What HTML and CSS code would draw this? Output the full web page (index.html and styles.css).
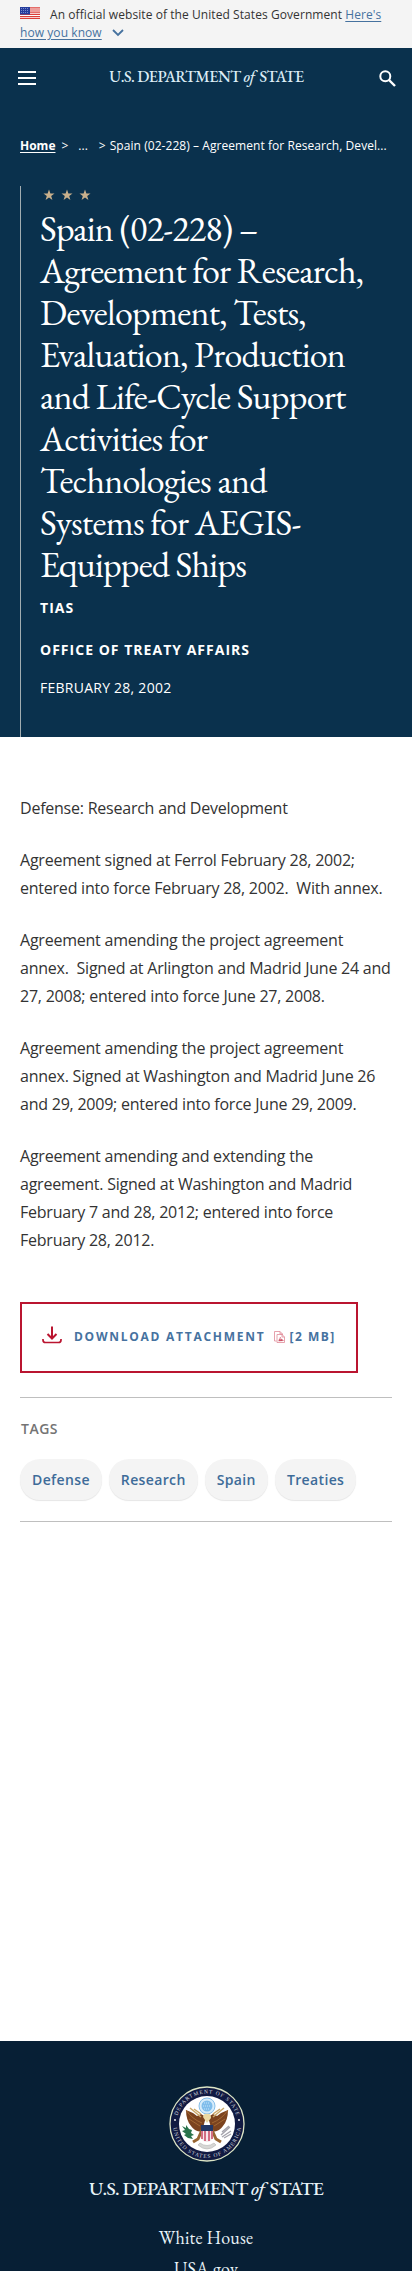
FILE: index.html
```html
<!DOCTYPE html>
<html lang="en">
<head>
<meta charset="utf-8">
<meta name="viewport" content="width=device-width">
<title>Spain (02-228) – Agreement for Research, Development, Tests</title>
<link rel="stylesheet" href="styles.css">
</head>
<body>
<div class="banner">
  <svg class="flag" viewBox="0 0 20 12" width="20" height="12"><rect width="20" height="12" fill="#fff"/><path d="M0 .8h20M0 3h20M0 5.2h20M0 7.4h20M0 9.6h20M0 11.6h20" stroke="#db3e39" stroke-width="1.2"/><rect width="10" height="7.5" fill="#243c9c"/><path d="M1 1.5h8M1 3.5h8M1 5.5h8" stroke="#8d9bd8" stroke-dasharray="1 1" stroke-width=".8"/></svg><span class="official">An official website of the United States Government</span> <a class="know" href="#">Here's<br>how you know</a><svg class="chev" viewBox="0 0 12 8" width="12" height="8"><path d="M1 1l5 5 5-5" fill="none" stroke="#46729f" stroke-width="1.8"/></svg>
</div>
<header class="bar">
  <svg class="menu" width="18" height="14" viewBox="0 0 18 14"><path d="M0 1h18M0 7h18M0 13h18" stroke="#fff" stroke-width="2"/></svg>
  <div class="brand">U.S. DEPARTMENT <i>of</i> STATE</div>
  <svg class="search" width="17" height="17" viewBox="0 0 17 17" fill="none" stroke="#fff"><circle cx="6.3" cy="6.3" r="5" stroke-width="2"/><path d="M10 10l6 6" stroke-width="2.4"/></svg>
</header>
<section class="hero">
  <nav class="crumbs"><a href="#">Home</a><span class="gt">&gt;</span><span class="dots">...</span><span class="gt2">&gt;</span><span class="here">Spain (02-228) – Agreement for Research, Devel...</span></nav>
  <div class="title-block">
    <svg class="stars" width="48" height="12" viewBox="0 0 48 12" fill="#c9b08c"><defs><path id="star" d="M6 .5l1.4 4h4.1L8.2 7l1.2 4L6 8.600 2.600 11l1.200-4L.5 4.500h4.100z"/></defs><use href="#star"/><use href="#star" x="18"/><use href="#star" x="36"/></svg>
    <h1>Spain (02-228) –<br>Agreement for Research,<br>Development, Tests,<br>Evaluation, Production<br>and Life-Cycle Support<br>Activities for<br>Technologies and<br>Systems for AEGIS-<br>Equipped Ships</h1>
    <p class="kind">TIAS</p>
    <p class="office">OFFICE OF TREATY AFFAIRS</p>
    <p class="date">FEBRUARY 28, 2002</p>
  </div>
</section>
<main>
  <div class="copy">
    <p>Defense: Research and Development</p>
    <p>Agreement signed at Ferrol February 28, 2002;<br>entered into force February 28, 2002.&nbsp; With annex.</p>
    <p>Agreement amending the project agreement<br>annex.&nbsp; Signed at Arlington and Madrid June 24 and<br>27, 2008; entered into force June 27, 2008.</p>
    <p>Agreement amending the project agreement<br>annex. Signed at Washington and Madrid June 26<br>and 29, 2009; entered into force June 29, 2009.</p>
    <p>Agreement amending and extending the<br>agreement. Signed at Washington and Madrid<br>February 7 and 28, 2012; entered into force<br>February 28, 2012.</p>
  </div>
  <a class="download" href="#">
    <svg class="dl" width="20" height="18" viewBox="0 0 20 18" fill="none" stroke="#ba1530" stroke-width="2"><path d="M10 .5v12M5.500 8l4.500 4.500L14.500 8"/><path d="M1 13v1q0 2.500 2.500 2.500h13q2.500 0 2.500-2.500v-1" stroke-width="1.700"/></svg>
    <span>DOWNLOAD ATTACHMENT</span>
    <svg class="pdf" width="11" height="12" viewBox="0 0 11 12" fill="none" stroke="#df8a98" stroke-width=".8"><path d="M2.500 10H.5V.5H6L8.500 3v1M6 .5V3h2.500M3 11.500v-8h5L10.500 6v5.500zM8 3.500V6h2.500M4.500 10l2-4 .5 2.500 2.500 1z"/><path d="M5 8.500h3.500v1.200H5z" fill="#c0273f" stroke="none"/></svg>
    <span class="size">[2 MB]</span>
  </a>
  <section class="tags">
    <h2>TAGS</h2>
    <div class="chips"><a href="#">Defense</a><a href="#">Research</a><a href="#">Spain</a><a href="#">Treaties</a></div>
  </section>
</main>
<footer>
  <svg class="seal" width="76" height="76" viewBox="0 0 76 76">
    <defs><path id="top" d="M7.500 38a30.500 30.500 0 0 1 61 0"/><path id="bottom" d="M4 38a34 34 0 0 0 68 0"/></defs>
    <circle cx="38" cy="38" r="37" fill="#111a42" stroke="#dce4c5" stroke-width="1.300"/>
    <circle cx="38" cy="38" r="28" fill="#fff"/>
    <g class="ring"><text><textPath href="#top" startOffset="50%" textLength="79">DEPARTMENT OF STATE</textPath></text><text><textPath href="#bottom" startOffset="50%" textLength="99">UNITED STATES OF AMERICA</textPath></text></g>
    <circle cx="6" cy="34" r=".9" fill="#fff"/><circle cx="70" cy="34" r=".9" fill="#fff"/>
    <circle cx="38" cy="20" r="8" fill="#d7ecfa" stroke="#86bfe9"/><circle cx="38" cy="20" r="5.500" fill="#7fbdeb"/><path d="M35 17h6M34 20h8M35 23h6" stroke="#d8effd" stroke-width=".8" stroke-dasharray="1 1"/>
    <path d="M37 31l-5-3-4 2-4-3-7-3q0 10 5 16 5 7 11 5zM39 31l5-3 4 2 4-3 7-3q0 10-5 16-5 7-11 5z" fill="#7b431f"/>
    <path d="M17 24q6 9 16 13M20 33l11 7M59 24q-6 9-16 13M56 33l-11 7" fill="none" stroke="#a66c35" stroke-width=".9"/>
    <path d="M21 22l11 9M55 22l-11 9M25 23l7 5M51 23l-7 5" stroke="#caa768" stroke-width="1.500"/>
    <path d="M33 44l-4 9-5 3M43 44l4 9 5 3" fill="none" stroke="#986532" stroke-width="3"/>
    <path d="M34 31q1-4 4-3 4-1 4 4l-4 5z" fill="#ead9a4"/>
    <path d="M13 40l4 2 0-3 3 4 3 1-1 3 3 2-3 1 2 3-5-1-4-3 2-1-4-3 3-1z" fill="#28734b"/>
    <path d="M52 49l9-8M53 51l9-6M53 46l7-6M55 52l7-4" stroke="#a5a4ad" stroke-width="1.400"/>
    <path d="M31 57q7 5 14 0l2 2q-9 8-18 0z" fill="#d7d7d5" stroke="#aaa" stroke-width=".5"/>
    <path d="M32 40h12v12q-2 4-6 4t-6-4z" fill="#f6e8ec"/><path d="M33 43v10M36 43v12M40 43v12M43 43v10" stroke="#c84560" stroke-width="1.500"/><path d="M32 39h12v6H32z" fill="#233764"/>
  </svg>
  <div class="footer-brand">U.S. DEPARTMENT <i>of</i> STATE</div>
  <a href="#" class="wh">White House</a>
  <a href="#" class="usa">USA.gov</a>
</footer>
</body>
</html>
```
FILE: styles.css
```css
* { box-sizing: border-box; }
html { overflow: hidden; }
body { margin: 0; height: 2271px; overflow: hidden; background: #fff; color: #323a45; font-family: "Open Sans", sans-serif; }
h1, h2, p { margin: 0; }
svg { flex: none; }
.banner { height: 48px; padding: 6px 20px 0; background: #f4f4f4; font-size: 12px; line-height: 18px; white-space: nowrap; color: #333; letter-spacing: .07px; }
.flag { margin: 1px 10px 0 0; vertical-align: top; }
.know { color: #46729f; text-underline-offset: 2px; }
.chev { margin-left: 10px; }
.bar { height: 60px; background: #0a314d; display: flex; align-items: center; justify-content: space-between; padding: 0 16px 0 18px; }
.brand, .footer-brand, h1, footer a { font-family: "EB Garamond", "Liberation Serif", serif; }
.brand { color: #dcecf5; font-size: 16px; font-weight: 500; letter-spacing: -.5px; line-height: 20px; margin: -2px 2px 0 0; white-space: nowrap; }
.brand i, .footer-brand i { margin-right: 2px; }
.hero { height: 629px; background: #0a314d; padding: 28px 20px 0; color: #fff; }
.crumbs { height: 20px; display: flex; font-size: 12px; line-height: 20px; white-space: nowrap; }
.crumbs a { font-weight: 700; color: #fff; text-underline-offset: 2px; }
.gt { margin-left: 6px; }
.dots { margin-left: 10px; }
.gt2 { margin-left: 11px; }
.here { margin-left: 4px; letter-spacing: .06px; }
.title-block { margin-top: 30px; height: 551px; border-left: 1px solid #a2adb1; padding-left: 19px; }
.stars { display: block; margin: 0 0 0 3px; position: relative; top: 3px; }
h1 { margin-top: 10px; font-size: 36px; font-weight: 400; line-height: 42px; letter-spacing: -.76px; white-space: nowrap; }
.kind, .office { font-size: 14px; line-height: 20px; font-weight: 700; letter-spacing: 1.020px; }
.kind { margin-top: 12px; }
.office { margin-top: 22px; }
.date { margin-top: 18px; font-size: 14px; line-height: 20px; letter-spacing: .25px; }
main { height: 1304px; padding: 57px 20px 0; }
.copy { font-size: 16px; line-height: 28px; letter-spacing: -.23px; white-space: nowrap; color: #333; }
.copy p { margin-bottom: 24px; }
.download { display: flex; align-items: center; width: 338px; height: 71px; margin-top: 48px; padding: 0 20px 2px; border: 2px solid #ba1530; color: #46729f; font-size: 12px; font-weight: 700; letter-spacing: 1.740px; text-decoration: none; white-space: nowrap; }
.dl { margin-right: 12px; position: relative; top: -2px; }
.pdf { margin: 0 5px 0 8px; }
.size { letter-spacing: 1.500px; }
.tags { margin-top: 24px; height: 125px; border-top: 1px solid #bfbfbf; border-bottom: 1px solid #bfbfbf; padding-top: 21px; }
h2 { font-size: 14px; line-height: 20px; font-weight: 600; color: #747474; letter-spacing: .5px; padding-left: 1px; }
.chips { display: flex; gap: 7px; margin-top: 20px; }
.chips a { height: 41px; padding: 0 12px; border-radius: 20px; background: #f4f4f4; box-shadow: 0 1px 1px #e6e6e6; color: #3e6c99; font-size: 14px; line-height: 41px; font-weight: 600; letter-spacing: .37px; text-decoration: none; }
footer { height: 230px; background: #071f35; display: flex; flex-direction: column; align-items: center; padding-top: 45px; color: #e7f2f7; overflow: hidden; }
.seal { margin-left: 2px; }
.ring text { fill: #d3d8df; font-family: "Liberation Serif", serif; font-size: 5.500px; text-anchor: middle; }
.footer-brand { margin-top: 14px; font-size: 19.500px; font-weight: 500; line-height: 24px; white-space: nowrap; letter-spacing: -.7px; }
footer a { color: #e7f2f7; text-decoration: none; font-size: 18px; line-height: 31px; letter-spacing: .2px; }
.wh { margin-top: 22px; }
```
